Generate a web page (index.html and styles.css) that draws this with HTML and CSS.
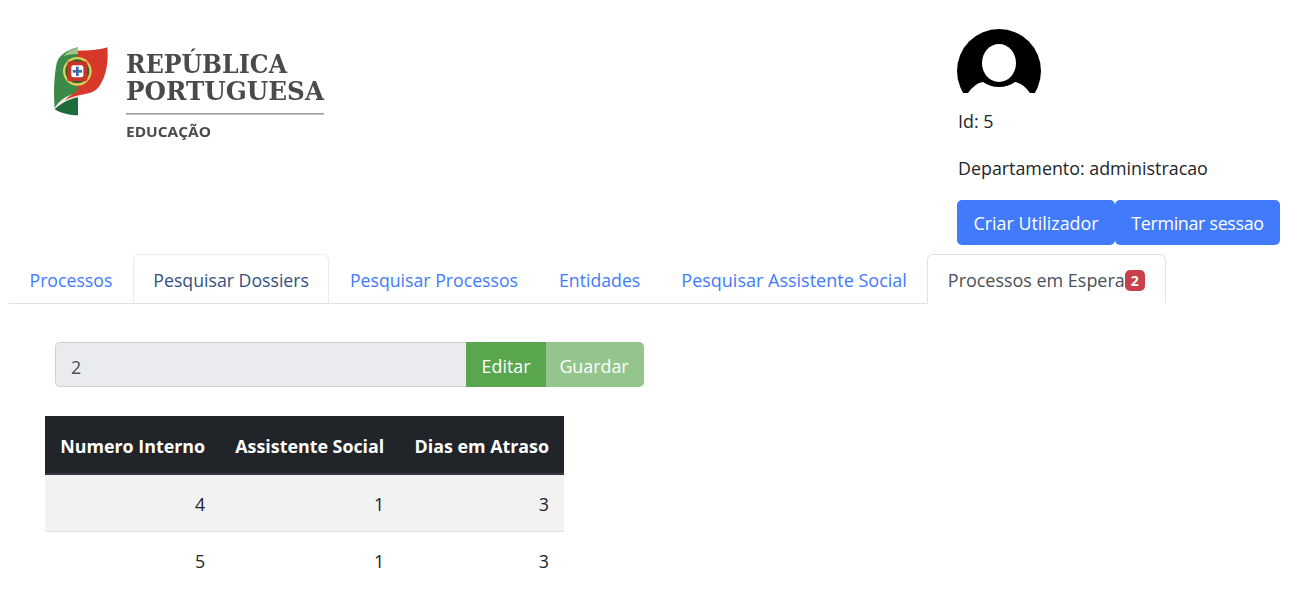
FILE: index.html
```html
<!DOCTYPE html>
<html lang="pt">
<head>
  <meta charset="UTF-8">
  <title>Processos em Espera</title>
  <link rel="stylesheet" href="styles.css">
</head>
<body>

  <!-- Header -->
  <div class="header">
    <div class="logo">
      <svg class="logo-art" viewBox="0 0 305 105" width="305" height="105">
        <!-- shield and leaf, drawn at 3x -->
        <g transform="translate(-1 0) scale(0.3333)">
          <path d="M102 22 C70 30 45 45 38 70 C30 110 28 160 32 205 C45 180 70 165 102 158 Z" fill="#3b8a47"/>
          <path d="M102 22 C84 28 68 36 58 48 C70 44 88 42 102 42 Z" fill="#9cc58a"/>
          <path d="M32 208 C45 182 72 166 102 158 L102 172 C72 178 48 192 32 208 Z" fill="#f4e3df"/>
          <path d="M102 32 C130 32 165 30 190 22 C194 60 188 110 165 140 C145 165 118 160 88 170 C76 174 70 176 62 182 C72 170 88 160 102 150 Z" fill="#d8382a"/>
          <path d="M32 208 C48 192 72 178 102 172 L102 226 C78 226 52 220 32 208 Z" fill="#1d6b38"/>
          <circle cx="100" cy="94" r="43" fill="#e2cd55"/>
          <circle cx="100" cy="94" r="36" fill="#2f5f38"/>
          <rect x="70" y="64" width="60" height="60" rx="8" fill="#c4362b"/>
          <rect x="82" y="76" width="36" height="36" rx="6" fill="#fff"/>
          <rect x="96" y="80" width="8" height="28" fill="#3a6ab0"/>
          <rect x="86" y="90" width="28" height="8" fill="#3a6ab0"/>
        </g>
        <text class="logo-name" x="81" y="33" textLength="161" lengthAdjust="spacingAndGlyphs">REPÚBLICA</text>
        <text class="logo-name" x="81" y="60" textLength="198" lengthAdjust="spacingAndGlyphs">PORTUGUESA</text>
        <rect class="logo-rule" x="81" y="73" width="198" height="1.6"/>
        <text class="logo-dept" x="81" y="97" textLength="85" lengthAdjust="spacingAndGlyphs">EDUCAÇÃO</text>
      </svg>
    </div>
    <div class="user">
      <svg class="avatar" viewBox="0 0 84 64" width="84" height="64">
        <circle cx="42" cy="42" r="42" fill="#000"/>
        <ellipse cx="42" cy="34" rx="17" ry="19" fill="#fff"/>
        <path d="M11 64 Q18 54 26 53 Q33 58 42 58 Q51 58 58 53 Q66 54 73 64 L73 70 L11 70 Z" fill="#fff"/>
      </svg>
      <p class="user-line">Id: 5</p>
      <p class="user-line">Departamento: administracao</p>
      <div class="user-actions">
        <button class="btn btn-blue btn-create">Criar Utilizador</button>
        <button class="btn btn-blue btn-logout">Terminar sessao</button>
      </div>
    </div>
  </div>

  <!-- Tabs -->
  <ul class="tabs">
    <li class="tab">Processos</li>
    <li class="tab tab-hover">Pesquisar Dossiers</li>
    <li class="tab">Pesquisar Processos</li>
    <li class="tab">Entidades</li>
    <li class="tab tab-wide">Pesquisar Assistente Social</li>
    <li class="tab tab-current">Processos em Espera<span class="badge">2</span></li>
  </ul>

  <!-- Edit row -->
  <div class="edit-row">
    <input class="edit-input" type="text" value="2" disabled>
    <button class="btn btn-green btn-edit">Editar</button>
    <button class="btn btn-green btn-save">Guardar</button>
  </div>

  <!-- Table -->
  <table class="results">
    <thead>
      <tr>
        <th>Numero Interno</th>
        <th>Assistente Social</th>
        <th>Dias em Atraso</th>
      </tr>
    </thead>
    <tbody>
      <tr class="striped">
        <td>4</td>
        <td>1</td>
        <td>3</td>
      </tr>
      <tr>
        <td>5</td>
        <td>1</td>
        <td>3</td>
      </tr>
    </tbody>
  </table>

</body>
</html>
```

FILE: styles.css
```css
* {
  box-sizing: border-box;
}

html {
  overflow: hidden;
}

body {
  margin: 0;
  background: #fff;
  font-family: "Open Sans", "Noto Sans", sans-serif;
  font-size: 17.85px;
  line-height: 27px;
  color: #212529;
}

.header {
  display: flex;
  height: 254px;
  padding: 29px 0 0 45px;
}

.logo {
  width: 912px;
  padding-top: 11px;
}

.logo-art {
  display: block;
  filter: blur(0.45px);
}

.logo-name {
  font-family: "DejaVu Serif", serif;
  font-weight: bold;
  font-size: 26.5px;
  fill: #4a4a49;
}

.logo-rule {
  fill: #9d9d9c;
}

.logo-dept {
  font-family: "Open Sans", sans-serif;
  font-weight: bold;
  font-size: 14px;
  fill: #4a4a49;
}

.avatar {
  display: block;
}

.user-line {
  margin: 15px 0 20px;
  padding-left: 1px;
  white-space: nowrap;
}

.user-line + .user-line {
  margin-bottom: 18px;
}

.user-actions {
  display: flex;
}

.btn {
  height: 45px;
  border: none;
  border-radius: 5px;
  padding: 2px 0 0;
  font: inherit;
  color: #fff;
}

.btn-blue {
  background: #417bfb;
}

.btn-create {
  width: 158px;
}

.btn-logout {
  width: 165px;
  letter-spacing: -0.3px;
}

.btn-green {
  background: #5aa64f;
  padding-top: 3px;
}

.btn-edit {
  width: 80px;
  border-radius: 0;
}

.btn-save {
  width: 98px;
  padding-right: 2px;
  background: #94c58d;
  border-radius: 0 5px 5px 0;
}

.tabs {
  display: flex;
  width: fit-content;
  height: 50px;
  margin: 0 0 0 9px;
  padding: 0;
  list-style: none;
  border-bottom: 1px solid #dee2e6;
  font-size: 17.7px;
  color: #417bfb;
}

.tab {
  display: flex;
  align-items: center;
  height: 50px;
  padding: 2px 19.5px 0;
  border: 1px solid transparent;
  border-radius: 6px 6px 0 0;
  white-space: nowrap;
}

.tab-hover {
  border-color: #e9ecef #e9ecef #dee2e6;
  color: #33507f;
}

.tab-wide {
  font-size: 18px;
}

.tab-current {
  padding-right: 20px;
  border-color: #dee2e6 #dee2e6 #fff;
  background: #fff;
  font-size: 17.95px;
  color: #495057;
}

.badge {
  width: 20px;
  height: 21px;
  margin-top: 1px;
  border-radius: 5px;
  background: #c8404b;
  color: #fff;
  font-size: 14px;
  font-weight: bold;
  line-height: 21px;
  text-align: center;
}

.edit-row {
  display: flex;
  width: 589px;
  height: 45px;
  margin: 38px 0 0 55px;
}

.edit-input {
  flex: 1;
  min-width: 0;
  border: 1px solid #ced1da;
  border-right: none;
  border-radius: 5px 0 0 5px;
  padding: 5px 15px 0;
  background: #eaebef;
  font: inherit;
  color: #495057;
}

.results {
  width: 519px;
  margin: 29px 0 0 45px;
  border-collapse: collapse;
}

.results th,
.results td {
  padding: 4px 15px 0;
  text-align: right;
  white-space: nowrap;
}

.results th {
  height: 58px;
  background: #212529;
  border-bottom: 2px solid #32383e;
  color: #fff;
  font-weight: bold;
}

.results td {
  height: 57px;
  border-bottom: 1px solid #dee2e6;
}

.results tr:last-child td {
  border-bottom: none;
}

.striped td {
  background: #f2f2f2;
}
```
